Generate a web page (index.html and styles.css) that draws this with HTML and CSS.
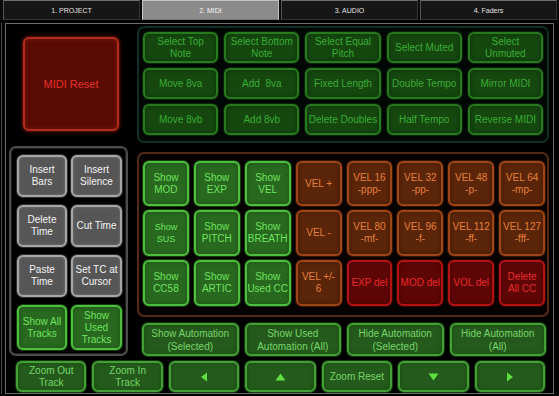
FILE: index.html
```html
<!DOCTYPE html>
<html>
<head>
<meta charset="utf-8">
<link rel="stylesheet" href="styles.css">
</head>
<body>
<div class="tabs">
  <div class="tab">1. PROJECT</div>
  <div class="tab active">2. MIDI</div>
  <div class="tab">3. AUDIO</div>
  <div class="tab">4. Faders</div>
</div>
<div class="frame">
  <div class="main">
    <div class="left">
      <div class="reset-area">
        <div class="btn midi">MIDI Reset</div>
      </div>
      <div class="grey-panel">
        <div class="btn grey">Insert<br>Bars</div>
        <div class="btn grey">Insert<br>Silence</div>
        <div class="btn grey">Delete<br>Time</div>
        <div class="btn grey">Cut Time</div>
        <div class="btn grey">Paste<br>Time</div>
        <div class="btn grey">Set TC at<br>Cursor</div>
        <div class="btn g2">Show All<br>Tracks</div>
        <div class="btn g2">Show<br>Used<br>Tracks</div>
      </div>
    </div>
    <div class="right">
      <div class="green-panel">
        <div class="btn g1">Select Top<br>Note</div>
        <div class="btn g1">Select Bottom<br>Note</div>
        <div class="btn g1">Select Equal<br>Pitch</div>
        <div class="btn g1">Select Muted</div>
        <div class="btn g1">Select<br>Unmuted</div>
        <div class="btn g1">Move 8va</div>
        <div class="btn g1">Add&nbsp; 8va</div>
        <div class="btn g1">Fixed Length</div>
        <div class="btn g1">Double Tempo</div>
        <div class="btn g1">Mirror MIDI</div>
        <div class="btn g1">Move 8vb</div>
        <div class="btn g1">Add 8vb</div>
        <div class="btn g1">Delete Doubles</div>
        <div class="btn g1">Half Tempo</div>
        <div class="btn g1">Reverse MIDI</div>
      </div>
      <div class="orange-panel">
        <div class="btn g2">Show<br>MOD</div>
        <div class="btn g2">Show<br>EXP</div>
        <div class="btn g2">Show<br>VEL</div>
        <div class="btn orange">VEL +</div>
        <div class="btn orange">VEL 16<br>-ppp-</div>
        <div class="btn orange">VEL 32<br>-pp-</div>
        <div class="btn orange">VEL 48<br>-p-</div>
        <div class="btn orange">VEL 64<br>-mp-</div>
        <div class="btn g2 small">Show<br>SUS</div>
        <div class="btn g2">Show<br>PITCH</div>
        <div class="btn g2">Show<br>BREATH</div>
        <div class="btn orange">VEL -</div>
        <div class="btn orange">VEL 80<br>-mf-</div>
        <div class="btn orange">VEL 96<br>-f-</div>
        <div class="btn orange">VEL 112<br>-ff-</div>
        <div class="btn orange">VEL 127<br>-fff-</div>
        <div class="btn g2">Show<br>CC58</div>
        <div class="btn g2">Show<br>ARTIC</div>
        <div class="btn g2">Show<br>Used CC</div>
        <div class="btn orange">VEL +/-<br>6</div>
        <div class="btn red">EXP del</div>
        <div class="btn red">MOD del</div>
        <div class="btn red">VOL del</div>
        <div class="btn red">Delete<br>All CC</div>
      </div>
      <div class="auto-row">
        <div class="btn g3 tall">Show Automation<br>(Selected)</div>
        <div class="btn g3 tall">Show Used<br>Automation (All)</div>
        <div class="btn g3 tall">Hide Automation<br>(Selected)</div>
        <div class="btn g3 tall">Hide Automation<br>(All)</div>
      </div>
    </div>
  </div>
  <div class="zoom-row">
    <div class="btn g3">Zoom Out<br>Track</div>
    <div class="btn g3">Zoom In<br>Track</div>
    <div class="btn g3"><svg width="10" height="10" viewBox="0 0 10 10"><polygon points="2,5 8,0.5 8,9.5" class="tri"/></svg></div>
    <div class="btn g3"><svg width="11" height="10" viewBox="0 0 11 10"><polygon points="5.5,1.5 10.5,8.5 0.5,8.5" class="tri"/></svg></div>
    <div class="btn g3">Zoom Reset</div>
    <div class="btn g3"><svg width="11" height="10" viewBox="0 0 11 10"><polygon points="0.5,1.5 10.5,1.5 5.5,8.5" class="tri"/></svg></div>
    <div class="btn g3"><svg width="10" height="10" viewBox="0 0 10 10"><polygon points="2,0.5 8,5 2,9.5" class="tri"/></svg></div>
  </div>
</div>
</body>
</html>
```

FILE: styles.css
```css
* { box-sizing: border-box; margin: 0; padding: 0; }
html, body { background: #000; }
body {
  width: 559px;
  height: 396px;
  overflow: hidden;
  font-family: "Liberation Sans", Arial, sans-serif;
  font-size: 10px;
}
.tabs {
  display: flex;
  gap: 2px;
  padding-left: 3px;
  height: 20px;
  background: #0b0b0b;
}
.tab {
  width: 137px;
  height: 20px;
  background: #161616;
  border: 1px solid #333;
  border-top-color: #6e6e6e;
  border-left-color: #555;
  color: #e2e2e2;
  font-size: 7px;
  display: flex;
  align-items: center;
  justify-content: center;
}
.tab.active {
  background: #8b8b8b;
  border-color: #c4c4c4;
  border-bottom-color: #777;
  color: #f6f6f6;
}
.frame {
  margin: 3px 0 0 5px;
  width: 549px;
  height: 371px;
  border: 1px solid #6c6c6c;
  box-shadow: -3px 0 0 0 #000, -4px 0 0 0 #4a4a4a;
  padding: 2px 0 0 3px;
  background: #000;
}
.main {
  display: flex;
  gap: 9px;
}
.left {
  width: 119px;
  display: flex;
  flex-direction: column;
}
.reset-area {
  height: 119px;
  padding: 11px 0 0 14px;
}
.right {
  width: 412px;
  display: flex;
  flex-direction: column;
}
.btn {
  display: flex;
  align-items: center;
  justify-content: center;
  text-align: center;
  line-height: 12px;
  border-radius: 6px;
  border: 2px solid;
}
.midi {
  width: 96px;
  height: 94px;
  background: #580a03;
  border-color: #b02c1d;
  box-shadow: 0 0 3px 1px #6a1208, inset 0 0 4px #7a1a0c;
  color: #e63228;
  font-size: 11px;
}
.grey-panel {
  margin-top: 1px;
  height: 210px;
  border: 2px solid #4c4c4c;
  border-radius: 7px;
  box-shadow: inset 0 0 0 1px #1e1e1e;
  padding: 7px 4px 0 6px;
  display: grid;
  grid-template-columns: 50px 51px;
  grid-template-rows: repeat(3, 42px) 45px;
  column-gap: 4px;
  row-gap: 8px;
}
.grey {
  background: #565656;
  border-color: #a6a6a6;
  box-shadow: 0 0 0 1px #2e2e2e, inset 0 0 3px #777;
  color: #f3f3f3;
}
.green-panel {
  height: 117px;
  border: 2px solid #0f2e25;
  border-radius: 7px;
  background: #010705;
  padding: 4px 4px 0 4px;
  display: grid;
  grid-template-columns: repeat(5, 1fr);
  grid-template-rows: repeat(3, 31px);
  column-gap: 6px;
  row-gap: 5px;
}
.g1 {
  background: #15470f;
  border-color: #287a1e;
  box-shadow: 0 0 0 1px #0a2407, inset 0 0 4px #0d3309;
  color: #3aac35;
}
.orange-panel {
  margin-top: 9px;
  height: 165px;
  border: 2px solid #552a14;
  border-radius: 7px;
  background: #050201;
  padding: 7px 2px 0 4px;
  display: grid;
  grid-template-columns: repeat(8, 1fr);
  grid-template-rows: 45px 46px 46px;
  column-gap: 5px;
  row-gap: 4px;
}
.g2 {
  background: #29681f;
  border-color: #4dbe3e;
  box-shadow: 0 0 0 1px #163d0f, inset 0 0 4px #1d5314;
  color: #6ee35f;
}
.small { font-size: 9px; }
.orange {
  background: #5a2508;
  border-color: #9e4615;
  box-shadow: 0 0 0 1px #361505, inset 0 0 4px #451b05;
  color: #e4803c;
}
.red {
  background: #5e0606;
  border-color: #b21313;
  box-shadow: 0 0 0 1px #3a0303, inset 0 0 4px #480404;
  color: #e82b2b;
}
.auto-row {
  margin-top: 6px;
  height: 33px;
  padding: 0 3px 0 5px;
  display: grid;
  grid-template-columns: repeat(4, 1fr);
  column-gap: 6px;
}
.g3 {
  background: #245a1b;
  border-color: #43a035;
  box-shadow: 0 0 0 1px #143a0e, inset 0 0 4px #1b4c13;
  color: #78d46c;
}
.tall { line-height: 13px; }
.zoom-row {
  margin: 5px 0 0 7px;
  width: 529px;
  height: 31px;
  display: grid;
  grid-template-columns: repeat(7, 1fr);
  column-gap: 6px;
}
.tri { fill: #5fe040; }
```
